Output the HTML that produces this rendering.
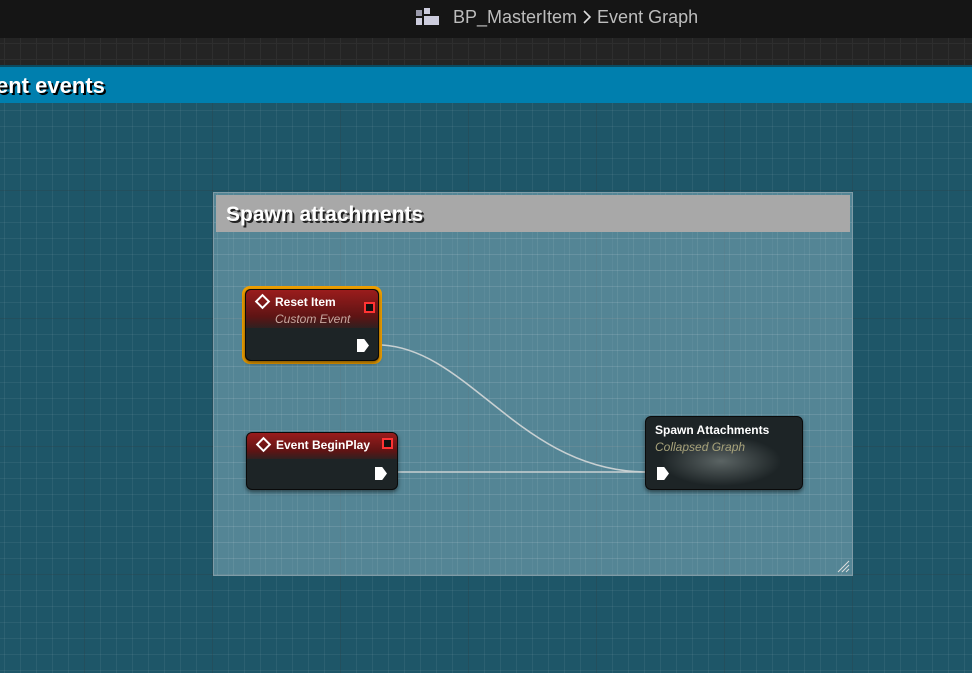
<!DOCTYPE html>
<html><head><style>
*{margin:0;padding:0;box-sizing:border-box}
body{width:972px;height:673px;overflow:hidden;position:relative;font-family:"Liberation Sans",sans-serif;
background-color:#1e5668;
background-image:
linear-gradient(90deg,rgba(0,0,0,.18) 1px,transparent 1px),
linear-gradient(0deg,rgba(0,0,0,.18) 1px,transparent 1px),
linear-gradient(90deg,rgba(255,255,255,.06) 1px,transparent 1px),
linear-gradient(0deg,rgba(255,255,255,.06) 1px,transparent 1px);
background-size:128px 128px,128px 128px,16px 16px,16px 16px;
background-position:84px 63px,84px 63px,4px 15px,4px 15px;}
.top{position:absolute;left:0;top:0;width:972px;height:38px;background:#151515}
.strip{position:absolute;left:0;top:38px;width:972px;height:27px;background-color:#242424;
background-image:linear-gradient(90deg,#2e2e2e 1px,transparent 1px),linear-gradient(0deg,#2e2e2e 1px,transparent 1px);background-size:16px 16px;background-position:4px 6px}
.blue{position:absolute;left:0;top:65px;width:972px;height:38px;background:#007fae;border-top:2px solid #0b4a60}
.blue span{position:absolute;left:-4px;top:6px;color:#fff;font-weight:bold;font-size:22px;text-shadow:2px 2px 0 #000}
.crumb{position:absolute;left:453px;top:7px;color:#bdbdbd;font-size:18px}
.cbox{position:absolute;left:213px;top:192px;width:640px;height:384px;background-color:rgba(150,190,205,.45);
background-image:linear-gradient(90deg,rgba(255,255,255,.07) 1px,transparent 1px),linear-gradient(0deg,rgba(255,255,255,.07) 1px,transparent 1px);background-size:16px 16px;background-position:3px 14px;border:1px solid #7f9ca7}
.chead{position:absolute;left:2px;top:2px;width:634px;height:37px;background:#a8a8a8;color:#fff;font-weight:bold;font-size:21px;padding:8px 10px;text-shadow:2px 2px 0 #222}
.node{position:absolute;background:#1d2426;border-radius:6px;border:1px solid #0a0a0a;box-shadow:0 2px 4px rgba(0,0,0,.5);overflow:hidden}
.nh{height:26px;background:linear-gradient(180deg,#9a1c1c,#5e1414 70%,#302020);color:#fff;font-weight:bold;font-size:12px;padding:5px 0 0 29px;position:relative}
.dia{position:absolute;left:11px;top:6px;width:11px;height:11px;border:2px solid #fff;transform:rotate(45deg)}
.red{position:absolute;width:11px;height:11px;background:#111;border:2px solid #f33}
.exec{position:absolute;width:12px;height:13px;background:#fff;clip-path:polygon(0 0,60% 0,100% 50%,60% 100%,0 100%)}
</style></head><body>
<div class="top"></div>
<svg style="position:absolute;left:415px;top:8px" width="26" height="18"><rect x="1" y="2" width="6" height="6" fill="#99a"/><rect x="9" y="0" width="6" height="6" fill="#ccd"/><rect x="1" y="10" width="6" height="7" fill="#ccd"/><rect x="9" y="8" width="15" height="9" fill="#ccd"/></svg>
<div class="crumb">BP_MasterItem <svg width="10" height="14" style="vertical-align:-1px"><path d="M2 1L8 7L2 13" stroke="#ddd" stroke-width="1.6" fill="none"/></svg> Event Graph</div>
<div class="strip"></div>
<div class="blue"><span>ent events</span></div>
<div class="cbox"><div class="chead">Spawn attachments</div>
<svg style="position:absolute;right:2px;bottom:2px" width="14" height="14"><path d="M2 13L13 2M6 13L13 6M10 13L13 10" stroke="#ddd" stroke-width="1"/></svg></div>
<svg style="position:absolute;left:0;top:0" width="972" height="673"><path d="M382 345C470 350 520 470 645 472" stroke="#c8d0d2" stroke-width="1.6" fill="none"/><path d="M390 472H645" stroke="#c8d0d2" stroke-width="1.6" fill="none"/></svg>
<div style="position:absolute;left:242px;top:286px;width:140px;height:78px;border:3px solid #f0a000;border-radius:8px;background:#5a3300"></div>
<div class="node" style="left:245px;top:289px;width:134px;height:72px">
<div class="nh" style="height:38px">Reset Item<div style="font-weight:normal;font-style:italic;color:#c8a8a0;font-size:12px;margin-top:3px">Custom Event</div><div class="dia"></div><div class="red" style="left:118px;top:12px"></div></div>
<div class="exec" style="left:111px;top:49px"></div></div>
<div class="node" style="left:246px;top:432px;width:152px;height:58px">
<div class="nh">Event BeginPlay<div class="dia"></div><div class="red" style="left:135px;top:5px"></div></div>
<div class="exec" style="left:128px;top:34px"></div></div>
<div class="node" style="left:645px;top:416px;width:158px;height:74px;background:radial-gradient(ellipse 60px 25px at 75px 44px,#5b6464,#1d2426)">
<div style="color:#fff;font-weight:bold;font-size:12px;padding:6px 0 0 9px">Spawn Attachments</div>
<div style="color:#a7a27a;font-style:italic;font-size:12px;padding:3px 0 0 9px">Collapsed Graph</div>
<div class="exec" style="left:11px;top:50px"></div></div>
</body></html>
